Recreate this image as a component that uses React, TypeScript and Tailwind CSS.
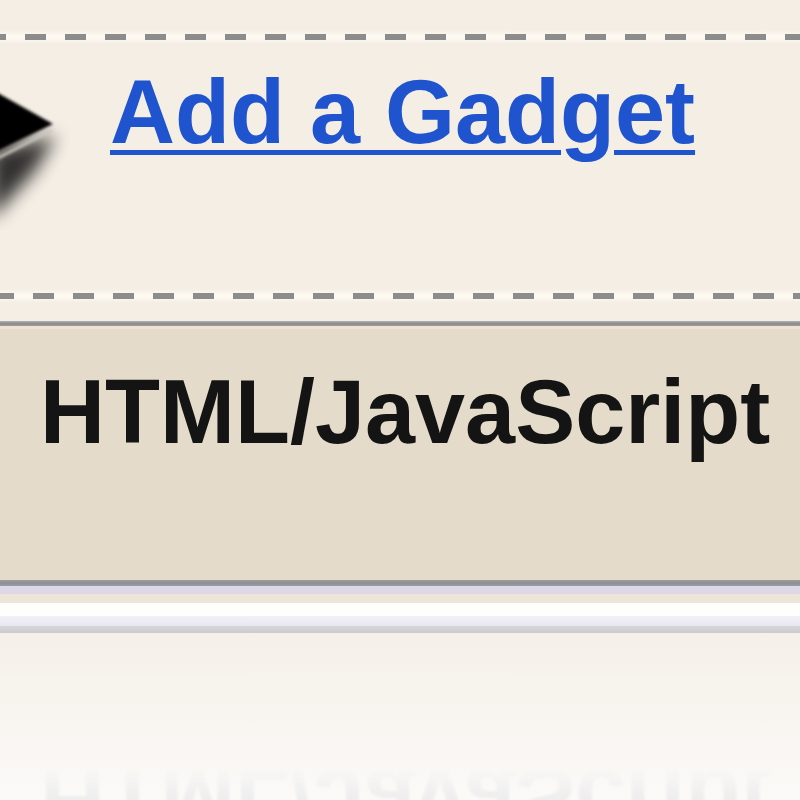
import React from "react";

const DashRow = ({ offset }: { offset: "a" | "b" }) => (
  <div className="h-[14px] bg-linear-to-b from-transparent via-[#fffbf3] to-transparent flex items-center">
    <div
      className={`h-[6px] w-full blur-[0.6px] bg-[repeating-linear-gradient(90deg,#8c8c8c_0px,#8c8c8c_21px,transparent_21px,transparent_40px)] ${
        offset === "a" ? "bg-[position:25px_0px]" : "bg-[position:33px_0px]"
      }`}
    />
  </div>
);

const Arrow = () => (
  <svg width="70" height="150" viewBox="0 0 70 150" className="shrink-0 mt-[36px]">
    <defs>
      <filter id="shadowBlur" x="-50%" y="-50%" width="200%" height="200%">
        <feGaussianBlur stdDeviation="9" />
      </filter>
      <filter id="edgeBlur">
        <feGaussianBlur stdDeviation="1.4" />
      </filter>
    </defs>
    {/* drop shadow under the arrow */}
    <polygon points="-10,70 56,56 34,92 -10,140" fill="#000" opacity="0.8" filter="url(#shadowBlur)" />
    <line x1="52" y1="50" x2="-2" y2="78" stroke="#c9c5be" strokeWidth="3" filter="url(#edgeBlur)" />
    <polygon points="-4,12 53,44 -4,72" fill="#050505" filter="url(#edgeBlur)" />
  </svg>
);

export default function App() {
  return (
    <div className="h-[800px] w-[800px] overflow-hidden bg-linear-to-b from-[#f4eee5] from-75% to-[#fbfaf8] font-['Liberation_Sans',Arial,sans-serif]">
      <div className="pt-[30px]">
        <DashRow offset="a" />
      </div>

      {/* gadget link row */}
      <div className="flex items-start h-[245px]">
        <Arrow />
        <a
          href="#"
          className="ml-[40px] mt-[23px] text-[90px] leading-none font-bold text-[#2054cf] underline decoration-[5px] underline-offset-[7px] whitespace-nowrap"
        >
          Add a Gadget
        </a>
      </div>

      <DashRow offset="b" />

      {/* gadget title box */}
      <div className="mt-[18px]">
        <div className="h-[5px] bg-linear-to-b from-[#b3b3b3] via-[#8d8d8d] to-[#a09c96]" />
        <div className="h-[254px] bg-[#e4dbca] border-t-[3px] border-[#ece3d3] pl-[40px] pt-[38px]">
          <div className="text-[90px] leading-none font-bold text-[#141414] whitespace-nowrap">
            HTML/JavaScript
          </div>
        </div>
        <div className="h-[6px] bg-linear-to-b from-[#a19d98] via-[#8d8f96] to-[#9a9aa6]" />
        <div className="h-[8px] bg-[#dcd8e8]" />
        <div className="h-[9px] bg-[#ede5d9]" />
        <div className="h-[13px] bg-[#fefefc]" />
        <div className="h-[10px] bg-linear-to-b from-[#f3f1f6] to-[#e9e6f2]" />
        <div className="h-[7px] bg-linear-to-b from-[#d6d5d8] to-[#ccccce]" />
      </div>

      {/* faded reflection */}
      <div className="mt-[122px] pl-[40px] -scale-y-100 blur-[1px]">
        <div className="text-[90px] leading-none font-bold whitespace-nowrap bg-linear-to-t from-transparent from-15% to-[#e4e4e8] to-75% bg-clip-text text-transparent">
          HTML/JavaScript
        </div>
      </div>
    </div>
  );
}
